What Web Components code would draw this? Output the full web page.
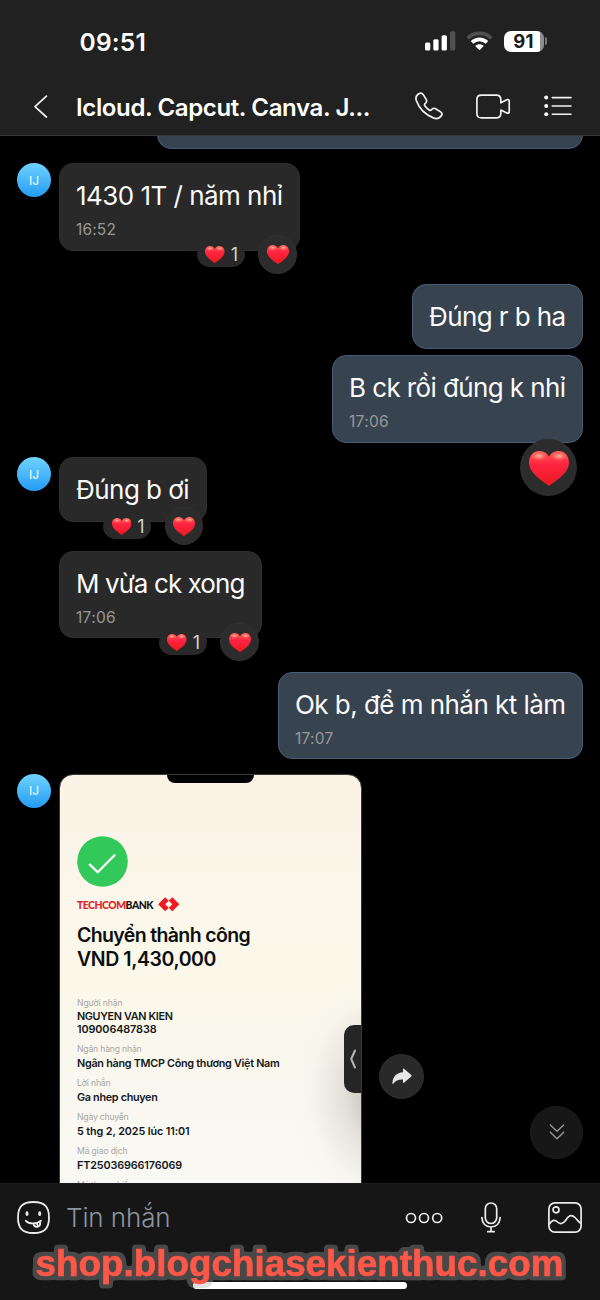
<!DOCTYPE html>
<html lang="vi">
<head>
<meta charset="utf-8">
<title>Chat</title>
<style>
html,body{margin:0;background:#000}
body{width:600px;height:1300px;overflow:hidden;font-family:Inter,"Noto Sans",sans-serif}
</style>
</head>
<body>
<chat-app></chat-app>
<script>
const define = (name, html, init) => {
  const t = document.createElement('template');
  t.innerHTML = html;
  customElements.define(name, class extends HTMLElement {
    connectedCallback() {
      if (this.shadowRoot) return;
      const root = this.attachShadow({ mode: 'open' });
      if (init) init(this);
      root.append(document.importNode(t.content, true));
      if (this.ready) this.ready(root);
    }
  });
};

/* One line of text, tracked so that it fills the width given in "w". */
define('fit-text', `<style>:host{display:block;white-space:pre}span{display:inline-block}</style><span><slot></slot></span>`, el => {
  el.ready = root => {
    const span = root.querySelector('span');
    const text = root.querySelector('slot').assignedNodes({ flatten: true }).map(n => n.textContent).join('');
    const w = parseFloat(el.getAttribute('w'));
    span.style.letterSpacing = (w - span.getBoundingClientRect().width) / [...text].length + 'px';
    el.style.width = w + 'px';
  };
});

define('heart-icon', `<style>:host{display:block;width:40px}svg{display:block;width:100%}</style>
<svg viewBox="0 0 40 35"><defs>
<linearGradient id="b" x1="0" y1="0" x2="0" y2="1"><stop offset="0" stop-color="#ff5a55"/><stop offset=".4" stop-color="#ff2340"/><stop offset="1" stop-color="#ea1a1e"/></linearGradient>
<radialGradient id="l"><stop offset="0" stop-color="#ffc3a4"/><stop offset="1" stop-color="#ff6a5e" stop-opacity="0"/></radialGradient></defs>
<path id="h" fill="url(#b)" d="M20 35C13 29.500 0 22.500 0 11.300C0 4.600 4.600 0 10.400 0C15 0 18.500 2.400 20 5.800C21.500 2.400 25 0 29.600 0C35.400 0 40 4.600 40 11.300C40 22.500 27 29.500 20 35Z"/>
<ellipse cx="10" cy="5" rx="8.500" ry="5" fill="url(#l)"/><ellipse cx="30" cy="5" rx="8.500" ry="5" fill="url(#l)"/></svg>`);

define('user-avatar', `<style>:host{display:flex;width:34px;height:34px;border-radius:50%;background:linear-gradient(#70d3ff,#249bf4);color:#fff;font-size:12px;align-items:center;justify-content:center;flex:none}</style><span>IJ</span>`);

define('chat-bubble', `<style>
:host{display:block;position:relative;box-sizing:border-box;flex:none;border:1px solid #303030;border-radius:14px;background:#292929;color:#fafafa;padding:15.800px 16px 0;height:65px;width:var(--w)}
:host([time]){height:87.500px}
:host([out]){background:#384350;border-color:#475c75}
fit-text{font-size:26px;line-height:32px}
fit-text.t{font-size:15.500px;line-height:18px;margin-top:9.200px;color:#989898}
.r{position:absolute;right:2.200px;bottom:-24px;display:flex;gap:13.500px;align-items:center}
.pill{display:flex;box-sizing:border-box;align-items:center;gap:6px;width:48px;height:25px;border-radius:13px;background:#292929;padding-left:8.500px;color:#d2d2d2;font-size:18px;line-height:24px;padding-top:1px}
.c{display:flex;box-sizing:border-box;align-items:center;justify-content:center;width:38.500px;height:38.500px;border-radius:50%;background:#2c2c2c;border:.5px solid #313131}
.pill heart-icon{width:19.500px}.c heart-icon{width:22px;margin-top:1px}
:host([out]) .r{right:4.700px;bottom:-54.500px}
:host([out]) .c{width:57px;height:57px;border:0}:host([out]) .c heart-icon{width:40px;margin-top:2px}
</style>`, el => {
  const w = parseFloat(el.getAttribute('w'));
  el.style.setProperty('--w', w + 'px');
  el.ready = root => {
    const add = (html) => root.append(document.createRange().createContextualFragment(html));
    if (el.textContent) add(`<fit-text w="${w - 34.5}">${el.textContent}</fit-text>`);
    if (el.hasAttribute('time')) add(`<fit-text class="t" w="${el.getAttribute('tw') || 40}">${el.getAttribute('time')}</fit-text>`);
    const r = el.getAttribute('react');
    if (r === 'count') add(`<div class="r"><div class="pill"><heart-icon></heart-icon><span>1</span></div><div class="c"><heart-icon></heart-icon></div></div>`);
    if (r === 'one') add(`<div class="r"><div class="c"><heart-icon></heart-icon></div></div>`);
  };
});

/* A message line: incoming ones start at the avatar column, outgoing ones sit on the right. */
define('chat-row', `<style>:host{display:flex;gap:8px;padding:0 17px 0 17px;align-items:flex-start;margin-top:var(--gap)}
:host([out]){justify-content:flex-end}:host([cont]){padding-left:59px}</style><slot></slot>`, el => {
  el.style.setProperty('--gap', el.getAttribute('gap') + 'px');
});

define('bank-receipt', `<style>
:host{display:block;position:relative;box-sizing:border-box;width:303px;height:440px;border:1px solid #3a3a38;border-radius:14px 14px 0 0;overflow:hidden;flex:none;padding:61px 0 0 17px;color:#14171a;
background:radial-gradient(ellipse 90px 125px at 318px 318px,#bdb9b4 0,#dcd8d2b0 40%,#f1eee844 75%,#f4f1e900 100%),linear-gradient(#fdf2e6 0,#fcf4e8 60px,#fbf7ea 130px,#fbf8ea 210px,#f9f7ee 300px,#f9f9f4 410px)}
.notch{position:absolute;left:107px;top:0;width:87px;height:8px;background:#000;border-radius:0 0 10px 10px}
.tab{position:absolute;right:0;top:250.500px;width:17px;height:68px;border-radius:10px 0 0 10px;background:#252525;display:flex;align-items:center;justify-content:center}
.ok{display:block}
.brand{display:flex;align-items:center;gap:5px;height:14px;margin-top:10.800px;font:900 10.400px/14px Lato,sans-serif;color:#111}
.brand b{color:#e0222a;font-weight:900}
h2{margin:12.800px 0 0;font-size:19.500px;line-height:23.300px;font-weight:600;color:#0c0e10}
dl{margin:27px 0 0}dt{font-size:8.600px;line-height:10px;color:#a8a6a2;margin:7.200px 0 0}dd{margin:2.400px 0 0;font-size:10.800px;line-height:12.400px;font-weight:600;padding:1px 0}
dd fit-text{line-height:12.400px}
</style>
<div class="notch"></div>
<svg class="ok" width="51" height="51" viewBox="0 0 51 51"><circle cx="25.500" cy="25.500" r="25.300" fill="#33c95a"/><path d="M12.800 28.700 20.700 36.200 37.500 19.300" fill="none" stroke="#fff" stroke-width="2.300" stroke-linecap="round" stroke-linejoin="round"/></svg>
<div class="brand"><fit-text w="76"><b>TECHCOM</b>BANK</fit-text>
<svg width="21.500" height="14.500" viewBox="0 0 22 15"><path fill="#ec1c24" d="M0 7.500 7.300.2 11 3.900 14.700.2 22 7.500 14.700 14.800 11 11.100 7.300 14.800Z"/><path fill="#fbf7ea" d="M7.300 7.500 11 3.900 14.700 7.500 11 11.100Z"/></svg></div>
<h2><fit-text w="173">Chuyển thành công</fit-text><fit-text w="139">VND 1,430,000</fit-text></h2>
<dl>
<dt><fit-text w="45.500">Người nhận</fit-text></dt><dd><fit-text w="95.500">NGUYEN VAN KIEN</fit-text><fit-text w="79.500">109006487838</fit-text></dd>
<dt><fit-text w="64.500">Ngân hàng nhận</fit-text></dt><dd><fit-text w="202.500">Ngân hàng TMCP Công thương Việt Nam</fit-text></dd>
<dt><fit-text w="33.500">Lời nhắn</fit-text></dt><dd><fit-text w="80.500">Ga nhep chuyen</fit-text></dd>
<dt><fit-text w="51.500">Ngày chuyển</fit-text></dt><dd><fit-text w="112.500">5 thg 2, 2025 lúc 11:01</fit-text></dd>
<dt><fit-text w="50.500">Mã giao dịch</fit-text></dt><dd><fit-text w="105">FT25036966176069</fit-text></dd>
<dt><fit-text w="56">Mã tham chiếu</fit-text></dt>
</dl>
<div class="tab"><svg width="8" height="20" viewBox="0 0 8 20"><path d="M6 1.500 2.200 10 6 18.500" fill="none" stroke="#b5b5b5" stroke-width="2" stroke-linejoin="round" stroke-linecap="round"/></svg></div>`);

define('share-button', `<style>:host{display:flex;box-sizing:border-box;width:45px;height:45px;border-radius:50%;background:#292929;border:1px solid #303030;margin:280px 0 0 9px;align-items:center;justify-content:center;flex:none}</style>
<svg width="20" height="17" viewBox="0 0 20 17"><path d="M11 1.200Q11 .2 12 .8L19.300 7Q20 7.700 19.300 8.400L12 14.800Q11 15.500 11 14.500V11.400C6.500 11.200 3.500 12.500 1.500 15.500Q.5 16.500.4 15C.8 8.500 4.500 4.600 11 4.200Z" fill="#e6e6e6"/></svg>`);

define('jump-button', `<style>:host{position:absolute;right:17px;bottom:24.500px;display:flex;box-sizing:border-box;width:53px;height:53px;border-radius:50%;background:#171717;border:1px solid #1e1e1e;align-items:center;justify-content:center}</style>
<svg width="16" height="16" viewBox="0 0 16 16" fill="none" stroke="#9a9a9a" stroke-width="1.300" stroke-linecap="round" stroke-linejoin="round"><path d="M1.300 1 8 7.300 14.700 1M1.300 8.300 8 14.700 14.700 8.300"/></svg>`);

define('status-bar', `<style>:host{display:flex;height:82px;box-sizing:border-box;align-items:center;padding:0 53px 0 79.500px;color:#fff}
.time{font-size:24.500px;line-height:30px;font-weight:600;margin-top:1px}.sp{flex:1}
.bars{margin-right:10.500px}.wifi{margin-right:10.500px}
.bat{display:flex;align-items:center}.cell{width:40px;height:21px;border-radius:7px;background:linear-gradient(90deg,#fff 36.500px,#8e8e8e 36.500px);color:#1c1c1c;font-weight:700;font-size:18.500px;line-height:21px;display:flex;justify-content:center;letter-spacing:.2px}
.tip{width:2.500px;height:8px;margin-left:1px;border-radius:0 3px 3px 0;background:#777}
</style>
<fit-text class="time" w="66.500">09:51</fit-text><span class="sp"></span>
<svg class="bars" width="31" height="20" viewBox="0 0 31 20" fill="#fff"><rect x="0" y="11.500" width="5.300" height="8" rx="1.500"/><rect x="8.300" y="8.300" width="5.300" height="11.200" rx="1.500"/><rect x="16.600" y="4.300" width="5.300" height="15.200" rx="1.500"/><rect x="25" y=".3" width="5.300" height="19.200" rx="1.500" fill="#505050"/></svg>
<svg class="wifi" width="27" height="20" viewBox="0 0 27 20" fill="none"><path d="M1.600 7.200C8.300.7 18.700.7 25.400 7.200" stroke="#505050" stroke-width="3.600"/><path d="M6 11.400C10.300 7.300 16.700 7.300 21 11.400" stroke="#fff" stroke-width="3.600"/><path d="M9.200 15C11.700 12.700 15.300 12.700 17.800 15L13.500 19.300Z" fill="#fff"/></svg>
<div class="bat"><div class="cell">91</div><div class="tip"></div></div>`);

define('nav-bar', `<style>:host{display:flex;height:53px;align-items:center;padding:0 28px 0 34px;color:#fff}
.title{font-size:24px;line-height:30px;font-weight:600;margin-left:28px;margin-top:-1px}.sp{flex:1}svg{display:block;flex:none;margin-top:-5px}
.a{margin-right:33.500px}.b{margin-right:33.500px}</style>
<svg width="14" height="23" viewBox="0 0 14 23" fill="none" stroke="#f2f2f2" stroke-width="1.700" stroke-linecap="round" stroke-linejoin="round"><path d="M12.400 1.200 1 11.700 12.400 22"/></svg>
<fit-text class="title" w="294">Icloud. Capcut. Canva. J...</fit-text><span class="sp"></span>
<svg class="a" width="28" height="28" viewBox="0 0 28 28" fill="none" stroke="#f2f2f2" stroke-width="1.700" stroke-linejoin="round"><path d="M4.300 1.400C5.700.7 7.100 1 8.100 2.400L11.300 7.600C12 8.900 11.700 10 10.700 11L9.800 11.900C9.300 12.600 9.400 13.300 10 14.100C11.200 15.700 12.600 17 14.200 18C15 18.500 15.700 18.500 16.300 17.900L17.400 16.900C18.400 16.100 19.400 16 20.600 16.700L25.600 19.900C27 20.800 27.300 22.200 26.500 23.500C24.700 26.300 21.900 27.200 18.400 25.900C10.200 22.600 4.200 16.500 1.300 8.500C.3 5.300 1.400 2.900 4.300 1.400Z"/></svg>
<svg class="b" width="34.500" height="25" viewBox="0 0 35 25" fill="none" stroke="#f2f2f2" stroke-width="1.700" stroke-linejoin="round"><path d="M5.500.9H20.500Q25.200.9 25.200 5.600V8.800L31.300 5.700Q33.700 4.700 33.700 7.200V17.500Q33.700 20 31.300 19L25.200 16.100V19.400Q25.200 24.100 20.500 24.100H5.500Q.9 24.100.9 19.400V5.600Q.9.900 5.500.9Z"/></svg>
<svg width="28" height="22" viewBox="0 0 28 22"><g fill="#fff"><circle cx="2.200" cy="2.600" r="2"/><circle cx="2.200" cy="11" r="2"/><circle cx="2.200" cy="19.200" r="2"/></g><path d="M8.300 2.600H27M8.300 11H27M8.300 19.200H27" stroke="#f2f2f2" stroke-width="1.600" stroke-linecap="round"/></svg>`);

define('message-composer', `<style>:host{display:block;position:relative;height:117px;background:#161616;flex:none;box-sizing:border-box;border-top:1px solid #1d1d1d}
.row{display:flex;align-items:center;height:67px;padding:0 18.500px 0 17px}
.ph{font-size:26px;line-height:32px;font-weight:300;color:#8d95a2;margin-left:16px;margin-top:1px}.sp{flex:1}svg{display:block;flex:none}
.m{margin:0 47px 0 38px}
.home{position:absolute;left:193px;top:98px;width:214px;height:7px;border-radius:4px;background:#fff}
.mark{position:absolute;left:0;top:56px}
</style>
<div class="row">
<svg width="33" height="33" viewBox="0 0 33 33" fill="none" stroke="#ececec" stroke-width="1.800" stroke-linecap="round"><path d="M16.500 1C27.500 1 32 5.500 32 16.500S27.500 32 16.500 32 1 27.500 1 16.500 5.500 1 16.500 1Z"/><ellipse cx="10" cy="12.700" rx="1.500" ry="2.400" fill="#ececec" stroke="none"/><ellipse cx="22.700" cy="12.700" rx="1.500" ry="2.400" fill="#ececec" stroke="none"/><path d="M8.800 19.800C12 23.300 19.500 23.400 24 19.700M16.300 22.400C16.600 25.200 19 26.500 21.300 25.400 23.300 24.500 23.700 22.500 22.700 20.800M19.600 22.200 20.500 24"/></svg>
<fit-text class="ph" w="104.500">Tin nhắn</fit-text><span class="sp"></span>
<svg width="38" height="12" viewBox="0 0 38 12" fill="none" stroke="#ececec" stroke-width="1.700"><circle cx="6" cy="6" r="4.500"/><circle cx="19" cy="6" r="4.500"/><circle cx="32.200" cy="6" r="4.500"/></svg>
<svg class="m" width="20" height="31" viewBox="0 0 20 31" fill="none" stroke="#ececec" stroke-width="1.700" stroke-linecap="round"><rect x="4.300" y="1" width="11.400" height="20.500" rx="5.700"/><path d="M.9 15.600C1.200 21.500 4.700 25 10 25S18.800 21.500 19.100 15.600M10 25V29.500M6.800 29.700H13.200"/></svg>
<svg width="34" height="31" viewBox="0 0 34 31" fill="none" stroke="#ececec" stroke-width="1.700" stroke-linejoin="round"><rect x=".9" y=".9" width="32.200" height="29.200" rx="6"/><circle cx="8" cy="7.800" r="3"/><path d="M1 22.500C4 17.500 7 17.400 9.500 20C12 22.500 15 22 17.500 18.500C20.500 13.300 23.500 12 27 15.500C29.500 18 31 20.500 33 21.500"/></svg>
</div>
<div class="home"></div>
<svg class="mark" width="600" height="60" viewBox="0 0 600 60"><defs><filter id="o" x="-5%" y="-30%" width="110%" height="160%" color-interpolation-filters="sRGB"><feMorphology in="SourceAlpha" operator="dilate" radius="3"/><feGaussianBlur stdDeviation="1.600"/><feComponentTransfer result="a"><feFuncA type="linear" slope="6" intercept="-.9"/></feComponentTransfer><feFlood flood-color="#a5a5a5" flood-opacity=".35"/><feComposite in2="a" operator="in"/><feMerge><feMergeNode/><feMergeNode in="SourceGraphic"/></feMerge></filter></defs>
<text x="35.500" y="35.500" textLength="528" lengthAdjust="spacingAndGlyphs" font-family="Liberation Sans,Arial,sans-serif" font-weight="700" font-size="37" fill="#ff5748" stroke="#ff5748" stroke-width=".7" filter="url(#o)">shop.blogchiasekienthuc.com</text></svg>`);

define('chat-app', `<style>
:host{display:flex;flex-direction:column;width:600px;height:1300px;background:#000}
header{height:136px;box-sizing:border-box;background:#212121;border-bottom:1px solid #373737;flex:none}
main{position:relative;height:1047px;flex:none;overflow:hidden;display:flow-root}
</style>
<header><status-bar></status-bar><nav-bar></nav-bar></header>
<main>
<chat-row out gap="-52.400"><chat-bubble out w="426"></chat-bubble></chat-row>
<chat-row gap="14.500"><user-avatar></user-avatar><chat-bubble w="241" time="16:52" react="count">1430 1T / năm nhỉ</chat-bubble></chat-row>
<chat-row out gap="33.700"><chat-bubble out w="171">Đúng r b ha</chat-bubble></chat-row>
<chat-row out gap="6"><chat-bubble out w="251" time="17:06" react="one">B ck rồi đúng k nhỉ</chat-bubble></chat-row>
<chat-row gap="14.500"><user-avatar></user-avatar><chat-bubble w="147.500" react="count">Đúng b ơi</chat-bubble></chat-row>
<chat-row cont gap="28.500"><chat-bubble w="203" time="17:06" react="count">M vừa ck xong</chat-bubble></chat-row>
<chat-row out gap="33.500"><chat-bubble out w="305" time="17:07" tw="38.500">Ok b, để m nhắn kt làm</chat-bubble></chat-row>
<chat-row gap="14.500"><user-avatar></user-avatar><bank-receipt></bank-receipt><share-button></share-button></chat-row>
<jump-button></jump-button>
</main>
<message-composer></message-composer>`);
</script>
</body>
</html>
